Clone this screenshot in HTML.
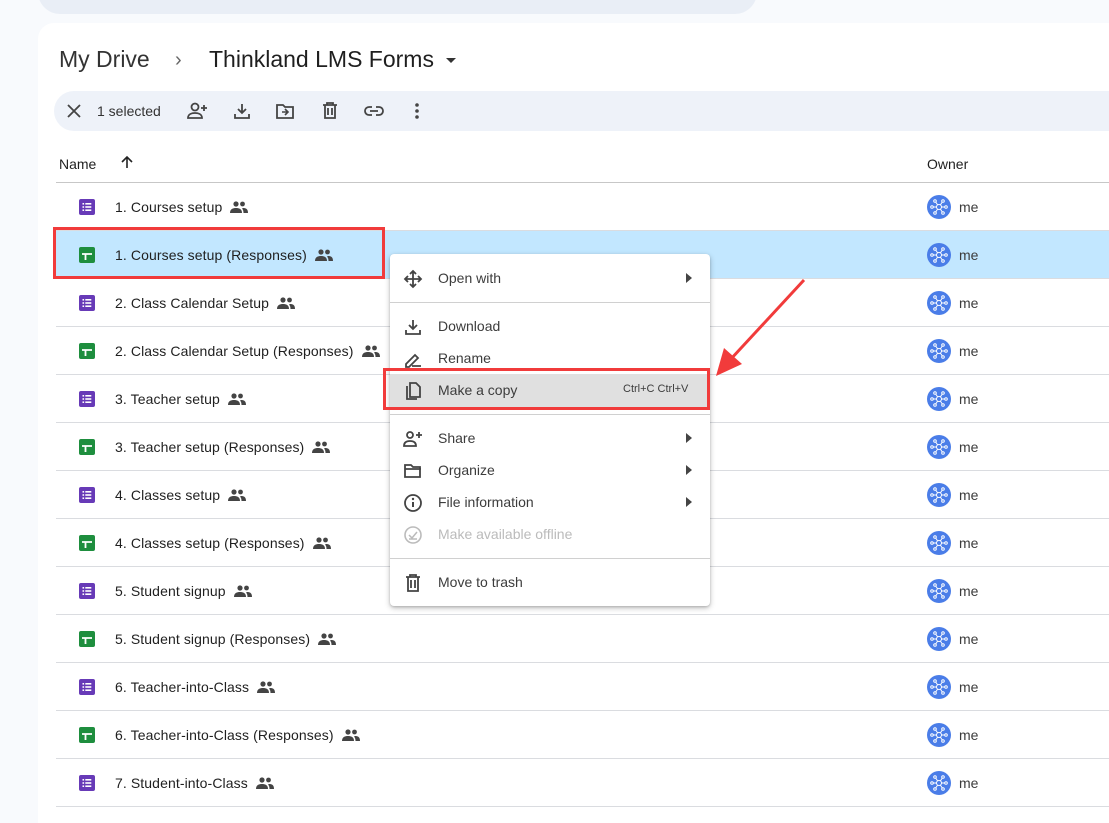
<!DOCTYPE html>
<html><head><meta charset="utf-8"><style>
*{margin:0;padding:0;box-sizing:border-box}
body{width:1109px;height:810px;overflow:hidden;background:#f8fafd;font-family:"Liberation Sans",Arial,sans-serif;color:#1f1f1f;position:relative}
.search{position:absolute;left:38px;top:-30px;width:719px;height:44px;background:#e9eef6;border-radius:0 0 22px 22px}
.panel{position:absolute;left:38px;top:23px;width:1100px;height:800px;background:#fff;border-radius:16px 0 0 0}
.crumb{position:absolute;top:46px;font-size:23px;color:#1f1f1f}
.bar{position:absolute;left:54px;top:91px;width:1080px;height:40px;background:#eef2f9;border-radius:20px}
.abs{position:absolute}
.hdr{position:absolute;top:156px;font-size:14px;color:#1f1f1f}
.hline{position:absolute;left:56px;right:0;height:1px;background:#c7c7c7}
.row{position:absolute;left:56px;right:0;height:48px;border-bottom:1px solid #dadce0}
.row.sel{background:#c2e7ff}
.row .ic{position:absolute;left:23px;top:16px;width:16px;height:16px;border-radius:2px}
.row .nm{position:absolute;left:59px;top:16px;font-size:14px;white-space:nowrap;letter-spacing:0.1px}
.row .av{position:absolute;left:871px;top:12px;width:24px;height:24px;border-radius:50%;background:#4a7de8}
.row .me{position:absolute;left:903px;top:16px;font-size:14px;color:#3c3c3c}
.menu{position:absolute;left:390px;top:254px;width:320px;height:352px;background:#fff;border-radius:4px;box-shadow:0 2px 6px rgba(0,0,0,.25),0 1px 2px rgba(0,0,0,.15)}
.mi{position:absolute;left:0;width:320px;height:32px;font-size:14px;color:#3c3c3c}
.mi span{position:absolute;left:48px;top:8px}
.mi svg{position:absolute;left:13px;top:7px}
.mi .tri{position:absolute;right:18px;top:11px;width:0;height:0;border-left:6px solid #444;border-top:5px solid transparent;border-bottom:5px solid transparent}
.md{position:absolute;left:0;width:320px;height:1px;background:#d0d0d0}
.red{position:absolute;border:3px solid #f13b3b}
</style></head><body>
<div class="search"></div>
<div class="panel"></div>
<div class="crumb" style="left:59px;color:#333">My Drive</div>
<div class="crumb" style="left:175px;font-size:20px;top:49px;color:#666">›</div>
<div class="crumb" style="left:209px">Thinkland LMS Forms</div>
<div class="abs" style="left:446px;top:58px;border-top:5px solid #333;border-left:5px solid transparent;border-right:5px solid transparent"></div>
<div class="bar"></div>
<svg class="abs" style="left:66px;top:103px" width="16" height="16" viewBox="0 0 16 16"><path d="M2 2L14 14M14 2L2 14" stroke="#444" stroke-width="1.8"/></svg>
<div class="abs" style="left:97px;top:103px;font-size:14px;color:#333">1 selected</div>
<svg class="abs" style="left:187px;top:101px" width="22" height="20" viewBox="0 0 22 20"><circle cx="8" cy="6" r="3.5" fill="none" stroke="#444" stroke-width="1.8"/><path d="M1 17c0-4 4-5 7-5s7 1 7 5z" fill="none" stroke="#444" stroke-width="1.8"/><path d="M17 4v6M14 7h6" stroke="#444" stroke-width="1.8"/></svg>
<svg class="abs" style="left:233px;top:102px" width="18" height="18" viewBox="0 0 18 18"><path d="M9 2v9M5 7l4 4 4-4M2 12v4h14v-4" fill="none" stroke="#444" stroke-width="1.8"/></svg>
<svg class="abs" style="left:275px;top:102px" width="20" height="18" viewBox="0 0 20 18"><path d="M2 3h6l2 2h8v11H2z" fill="none" stroke="#444" stroke-width="1.8"/><path d="M7 10h6M10 7l3 3-3 3" fill="none" stroke="#444" stroke-width="1.6"/></svg>
<svg class="abs" style="left:321px;top:101px" width="18" height="19" viewBox="0 0 18 19"><path d="M2 4h14M6 4V2h6v2M4 4v13h10V4M7 7v7M11 7v7" fill="none" stroke="#444" stroke-width="1.8"/></svg>
<svg class="abs" style="left:364px;top:104px" width="20" height="14" viewBox="0 0 20 14"><path d="M8 3H5a4 4 0 000 8h3M12 3h3a4 4 0 010 8h-3M6 7h8" fill="none" stroke="#444" stroke-width="1.8"/></svg>
<svg class="abs" style="left:414px;top:102px" width="6" height="18" viewBox="0 0 6 18"><circle cx="3" cy="3" r="1.8" fill="#444"/><circle cx="3" cy="9" r="1.8" fill="#444"/><circle cx="3" cy="15" r="1.8" fill="#444"/></svg>
<div class="hdr" style="left:59px">Name</div>
<svg class="abs" style="left:120px;top:155px" width="14" height="14" viewBox="0 0 14 14"><path d="M7 13V2M2 7l5-5 5 5" fill="none" stroke="#222" stroke-width="1.6"/></svg>
<div class="hdr" style="left:927px">Owner</div>
<div class="hline" style="top:182px"></div>

<div id="rows"></div>
<script>
var names=["1. Courses setup","1. Courses setup (Responses)","2. Class Calendar Setup","2. Class Calendar Setup (Responses)","3. Teacher setup","3. Teacher setup (Responses)","4. Classes setup","4. Classes setup (Responses)","5. Student signup","5. Student signup (Responses)","6. Teacher-into-Class","6. Teacher-into-Class (Responses)","7. Student-into-Class"];
var h="";
var ppl='<svg width="18" height="12" viewBox="0 0 18 12" style="margin-left:8px;vertical-align:-1px"><circle cx="6" cy="3" r="2.6" fill="#444"/><circle cx="12.5" cy="3" r="2.4" fill="#444"/><path d="M0 12c0-4 3-5 6-5s6 1 6 5z" fill="#444"/><path d="M13 7c3 0 5 1 5 5h-4.5c0-2-.5-3.5-1.5-4.5z" fill="#444"/></svg>';
var av='<svg width="24" height="24" viewBox="0 0 24 24"><g stroke="#fff" stroke-width="1" fill="none"><circle cx="12" cy="12" r="2.5"/><circle cx="8" cy="6" r="1.3"/><circle cx="16" cy="6" r="1.3"/><circle cx="8" cy="18" r="1.3"/><circle cx="16" cy="18" r="1.3"/><circle cx="5" cy="12" r="1.3"/><circle cx="19" cy="12" r="1.3"/><path d="M9.5 12H6.3M14.5 12h3.2M10.7 10L8.7 7M13.3 10l2-3M10.7 14l-2 3M13.3 14l2 3"/></g></svg>';
for(var i=0;i<names.length;i++){
 var t=183+i*48, form=(i%2==0);
 var ic=form?'<div class="ic" style="background:#673ab7"><svg width="16" height="16" viewBox="0 0 16 16"><g fill="#fff"><rect x="3.5" y="4" width="1.6" height="1.6"/><rect x="3.5" y="7.2" width="1.6" height="1.6"/><rect x="3.5" y="10.4" width="1.6" height="1.6"/><rect x="6.3" y="4" width="6" height="1.6"/><rect x="6.3" y="7.2" width="6" height="1.6"/><rect x="6.3" y="10.4" width="6" height="1.6"/></g></svg></div>':'<div class="ic" style="background:#1e8e3e"><svg width="16" height="16" viewBox="0 0 16 16"><path d="M3 7h10M6.5 7v6" stroke="#fff" stroke-width="1.8"/></svg></div>';
 h+='<div class="row'+(i==1?' sel':'')+'" style="top:'+t+'px">'+ic+'<div class="nm">'+names[i]+ppl+'</div><div class="av">'+av+'</div><div class="me">me</div></div>';
}
document.getElementById('rows').innerHTML=h;
</script>

<div class="menu">
 <div class="mi" style="top:8px"><svg width="20" height="20" viewBox="0 0 20 20"><path d="M10 2v16M2 10h16M7 5l3-3 3 3M7 15l3 3 3-3M5 7l-3 3 3 3M15 7l3 3-3 3" fill="none" stroke="#444" stroke-width="1.8"/></svg><span>Open with</span><div class="tri"></div></div>
 <div class="md" style="top:48px"></div>
 <div class="mi" style="top:56px"><svg width="20" height="20" viewBox="0 0 20 20"><path d="M10 3v9M6 8l4 4 4-4M3 13v4h14v-4" fill="none" stroke="#444" stroke-width="1.8"/></svg><span>Download</span></div>
 <div class="mi" style="top:88px"><svg width="20" height="20" viewBox="0 0 20 20"><path d="M3 15l9-9 3 3-9 9H3zM9 17h9" fill="none" stroke="#444" stroke-width="1.8"/></svg><span>Rename</span></div>
 <div class="mi" style="top:120px;background:#e0e0e0;height:33px"><svg width="20" height="20" viewBox="0 0 20 20"><path d="M7 2h6l4 4v10H7zM4 5v13h10" fill="none" stroke="#444" stroke-width="1.8"/></svg><span>Make a copy</span><span style="left:233px;top:9px;font-size:11px">Ctrl+C Ctrl+V</span></div>
 <div class="md" style="top:160px"></div>
 <div class="mi" style="top:168px"><svg width="20" height="20" viewBox="0 0 20 20"><circle cx="7" cy="6" r="3" fill="none" stroke="#444" stroke-width="1.8"/><path d="M1 17c0-4 3-5 6-5s6 1 6 5z" fill="none" stroke="#444" stroke-width="1.8"/><path d="M16 3v6M13 6h6" stroke="#444" stroke-width="1.8"/></svg><span>Share</span><div class="tri"></div></div>
 <div class="mi" style="top:200px"><svg width="20" height="20" viewBox="0 0 20 20"><path d="M2 4h6l2 2h7v10H2zM2 8h16" fill="none" stroke="#444" stroke-width="1.8"/></svg><span>Organize</span><div class="tri"></div></div>
 <div class="mi" style="top:232px"><svg width="20" height="20" viewBox="0 0 20 20"><circle cx="10" cy="10" r="8" fill="none" stroke="#444" stroke-width="1.8"/><path d="M10 9v5" stroke="#444" stroke-width="2"/><circle cx="10" cy="6" r="1.2" fill="#444"/></svg><span>File information</span><div class="tri"></div></div>
 <div class="mi" style="top:264px;color:#bbb"><svg width="20" height="20" viewBox="0 0 20 20"><circle cx="10" cy="10" r="8" fill="none" stroke="#bbb" stroke-width="1.6"/><path d="M6 10l3 3 5-6M6 14h8" fill="none" stroke="#bbb" stroke-width="1.5"/></svg><span>Make available offline</span></div>
 <div class="md" style="top:304px"></div>
 <div class="mi" style="top:312px"><svg width="20" height="20" viewBox="0 0 20 20"><path d="M3 4h14M7 4V2h6v2M5 4v14h10V4M8 7v8M12 7v8" fill="none" stroke="#444" stroke-width="1.8"/></svg><span>Move to trash</span></div>
</div>

<div class="red" style="left:53px;top:227px;width:332px;height:52px"></div>
<div class="red" style="left:383px;top:368px;width:327px;height:42px"></div>
<svg class="abs" style="left:700px;top:270px" width="120" height="120" viewBox="0 0 120 120"><path d="M104 10L30 90" stroke="#f13b3b" stroke-width="3"/><path d="M16 106L24 78L42 94z" fill="#f13b3b"/></svg>
</body></html>
